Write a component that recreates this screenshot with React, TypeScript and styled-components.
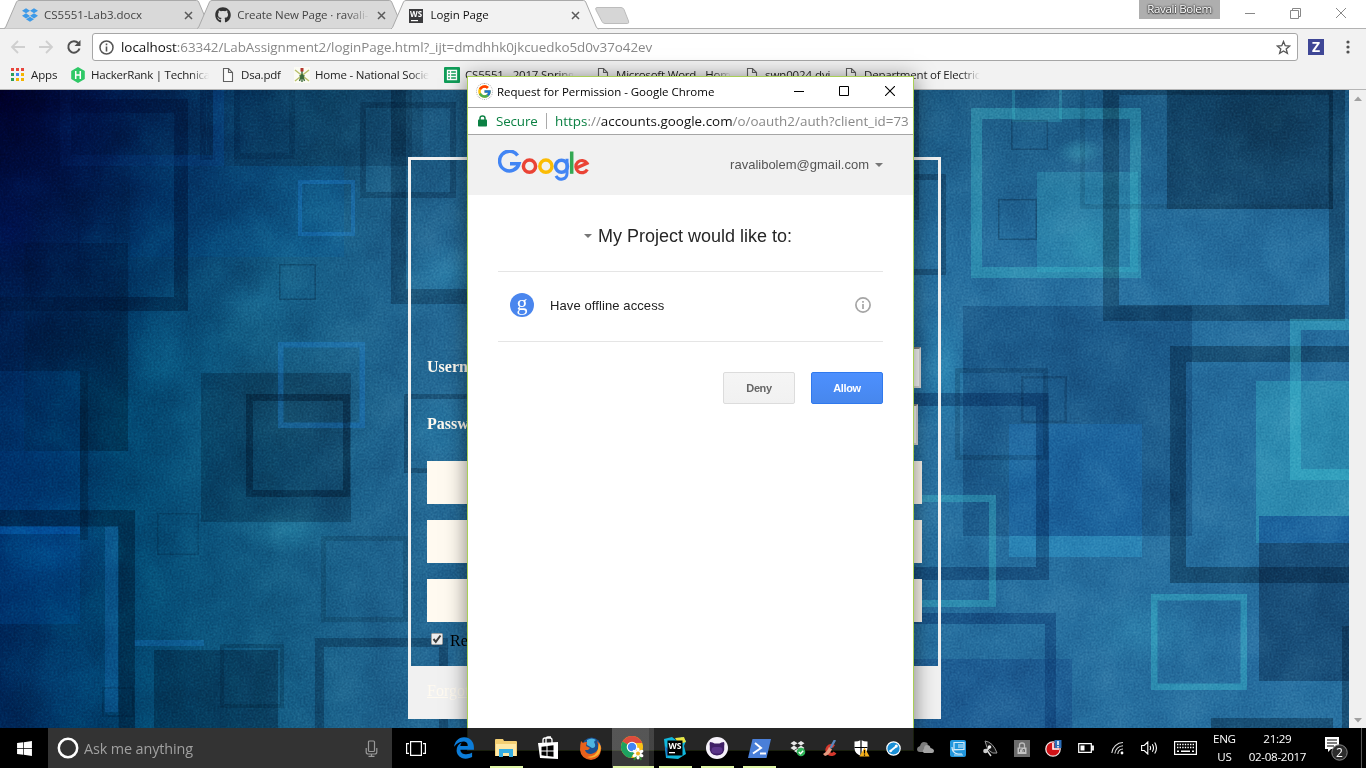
import React from "react";
import styled, { createGlobalStyle } from "styled-components";
import { FcGoogle } from "react-icons/fc";
import { FaGithub, FaDropbox, FaEdgeLegacy, FaWindows } from "react-icons/fa";

const UI = `"Open Sans", "Noto Sans", sans-serif`;
const ARIAL = `"Liberation Sans", Arial, sans-serif`;
const SERIF = `"Liberation Serif", "Times New Roman", serif`;

const Global = createGlobalStyle`
  * { box-sizing: border-box; }
  html, body { margin: 0; padding: 0; background: #000; overflow: hidden; }
  body { font-family: ${UI}; font-size: 11.5px; color: #222; }
  svg { display: block; flex: none; }
`;

const Desktop = styled.div`
  position: relative;
  width: 1366px;
  height: 768px;
  overflow: hidden;
  display: flex;
  flex-direction: column;
`;

/* ---------- browser frame ---------- */

const Browser = styled.div`
  flex: none;
  height: 728px;
  display: flex;
  flex-direction: column;
  background: #f2f2f2;
`;

const TabStrip = styled.div`
  height: 29px;
  flex: none;
  display: flex;
  background: #fff;
  border-bottom: 1px solid #b2b2b2;
  padding-left: 8px;
`;

const TabBox = styled.div<{ $active?: boolean }>`
  position: relative;
  width: 193.3px;
  height: ${(p) => (p.$active ? 29 : 28)}px;
  z-index: ${(p) => (p.$active ? 2 : 1)};
  flex: none;
  display: flex;
  align-items: center;
  padding: 2px 7px 0 14px;
`;

const TabShape = styled.svg`
  position: absolute;
  left: 0;
  top: 0;
  overflow: visible;
`;

const TabIcon = styled.span`
  position: relative;
  width: 16px;
  flex: none;
  margin-right: 6px;
`;

const TabTitle = styled.span<{ $active?: boolean; $fade?: boolean; $ls?: number }>`
  position: relative;
  width: 134px;
  flex: none;
  overflow: hidden;
  white-space: nowrap;
  padding-bottom: 2px;
  color: ${(p) => (p.$active ? "#111" : "#444")};
  letter-spacing: ${(p) => p.$ls ?? 0}px;
  ${(p) => p.$fade && "mask-image: linear-gradient(90deg, #000 82%, transparent 99%);"}
`;

const TabClose = styled.svg`
  position: relative;
  margin-left: 6px;
`;

const NewTab = styled.svg`
  margin: 6px 0 0 6px;
`;

const WindowControls = styled.div`
  margin-left: auto;
  display: flex;
  align-items: flex-start;
`;

const UserBadge = styled.div`
  width: 81px;
  height: 19px;
  background: #aeaeae;
  color: #fff;
  font-size: 11.5px;
  letter-spacing: -0.35px;
  line-height: 18px;
  text-align: center;
  text-shadow: 0 0 2px #333, 0 0 2px #333, 0 1px 1px #444;
`;

const ControlSlot = styled.div<{ $w: number; $pad?: number }>`
  width: ${(p) => p.$w}px;
  height: 26px;
  padding-left: ${(p) => p.$pad ?? 0}px;
  display: flex;
  align-items: center;
  justify-content: center;
`;

const Toolbar = styled.div`
  height: 35px;
  flex: none;
  display: flex;
  align-items: center;
  padding: 1px 11px 0 10px;
`;

const NavIcon = styled.svg<{ $gap: number }>`
  margin-right: ${(p) => p.$gap}px;
`;

const Omnibox = styled.div`
  width: 1206px;
  height: 28px;
  border: 1px solid #a6a6a6;
  border-radius: 3px;
  background: #fff;
  display: flex;
  align-items: center;
  padding: 0 6px;
`;

const Url = styled.span<{ $ls: number }>`
  flex: 1;
  margin-left: 7px;
  font-size: 13.4px;
  letter-spacing: ${(p) => p.$ls}px;
  color: #888;
  white-space: nowrap;
  overflow: hidden;
  b { font-weight: 400; color: #111; }
  i { font-style: normal; color: #0b8043; }
`;

const Extension = styled.div`
  width: 16px;
  height: 16px;
  margin-left: 10px;
  background: #3f4796;
  color: #fff;
  font: 700 14px/16px ${UI};
  text-align: center;
`;

const BookmarkBar = styled.div`
  height: 26px;
  flex: none;
  display: flex;
  padding-left: 10px;
  border-bottom: 1px solid #b6b6b6;
`;

const BookmarkItem = styled.div<{ $w: number }>`
  width: ${(p) => p.$w}px;
  height: 22px;
  flex: none;
  display: flex;
  align-items: center;
  gap: 5px;
`;

const BookmarkText = styled.span<{ $fade?: boolean; $ls?: number }>`
  max-width: 118px;
  overflow: hidden;
  white-space: nowrap;
  padding-bottom: 2px;
  letter-spacing: ${(p) => p.$ls ?? -0.2}px;
  ${(p) => p.$fade && "mask-image: linear-gradient(90deg, #000 84%, transparent 100%);"}
`;

/* ---------- web page ---------- */

const Viewport = styled.div`
  flex: 1;
  min-height: 0;
  display: flex;
`;

const Page = styled.main`
  position: relative;
  width: 1349px;
  overflow: hidden;
  font-family: ${SERIF};
  font-size: 16px;
`;

const Wallpaper = styled.svg`
  position: absolute;
  inset: 0;
`;

const ScrollBar = styled.div`
  width: 17px;
  background: #f0f0f0;
  display: flex;
  flex-direction: column;
  justify-content: space-between;
  align-items: center;
  padding: 6px 0 5px;
`;

const LoginCard = styled.form`
  position: relative;
  width: 533px;
  height: 562px;
  margin: 67px 0 0 408px;
  border: 3px solid #f1f1f1;
  border-bottom: 0;
  display: flex;
  flex-direction: column;
`;

const CardBody = styled.div`
  flex: 1;
  padding: 187px 16px 0;
`;

const FieldRow = styled.label<{ $pad: number }>`
  display: flex;
  align-items: center;
  justify-content: space-between;
  height: 41px;
  margin-bottom: 16px;
  padding-right: ${(p) => p.$pad}px;
  color: #fffaf0;
  font-weight: 700;
  span { padding-bottom: 2px; }
`;

const Field = styled.input`
  width: 380px;
  height: 41px;
  border: 2px inset #ddd;
  background: #fff;
`;

const FormButton = styled.button`
  display: block;
  width: 495px;
  height: 43px;
  margin: 0 0 16px;
  border: 0;
  background: #fffaf0;
`;

const Remember = styled.div`
  display: flex;
  align-items: center;
  height: 18px;
  margin-top: -8px;
  padding-left: 4px;
  gap: 7px;
  color: #000;
  font-size: 16px;
  span { padding-top: 4px; }
`;

const CardFooter = styled.div`
  height: 53px;
  margin: 0 -3px;
  padding: 16px 19px;
  background: #f1f1f1;
  a { color: #fffaf0; font-size: 16px; }
`;

/* ---------- popup window ---------- */

const Popup = styled.section`
  position: absolute;
  left: 467px;
  top: 76px;
  width: 447px;
  height: 675px;
  border: 1px solid #a9cf57;
  background: #fff;
  box-shadow: 0 2px 20px rgba(0, 0, 0, 0.5);
  display: flex;
  flex-direction: column;
  font-family: ${ARIAL};
`;

const PopupTitle = styled.div`
  height: 31px;
  flex: none;
  display: flex;
  align-items: center;
  padding: 0 0 2px 8px;
  border-bottom: 1px solid #a6a6a6;
  font-family: ${UI};
  font-size: 11.5px;
  color: #000;
`;

const PopupTitleText = styled.span`
  flex: 1;
  margin-left: 4px;
  letter-spacing: -0.02px;
`;

const PopupAddress = styled.div`
  height: 27px;
  flex: none;
  display: flex;
  align-items: center;
  padding: 0 5px 0 10px;
  border-bottom: 1px solid #a6a6a6;
  font-family: ${UI};
`;

const Secure = styled.span`
  width: 51px;
  margin-left: 9px;
  margin-right: 1px;
  border-right: 1px solid #aaa;
  line-height: 16px;
  font-size: 13.4px;
  color: #0b8043;
  letter-spacing: -0.15px;
  white-space: nowrap;
`;

const AccountBar = styled.div`
  height: 60px;
  flex: none;
  display: flex;
  align-items: center;
  justify-content: space-between;
  padding: 0 30px;
  background: #f1f1f1;
`;

const Account = styled.span`
  display: flex;
  align-items: center;
  gap: 6px;
  padding-bottom: 1px;
  font-size: 13px;
  color: #555;
`;

const Consent = styled.div`
  display: flex;
  flex-direction: column;
  padding: 0 30px;
`;

const ConsentTitle = styled.h1`
  height: 76px;
  margin: 0;
  padding: 6px 5px 0 0;
  display: flex;
  align-items: center;
  justify-content: center;
  gap: 6px;
  font-size: 18px;
  font-weight: 400;
  color: #262626;
`;

const Scope = styled.div`
  height: 71px;
  display: flex;
  align-items: center;
  padding: 0 12px 3px;
  border-top: 1px solid #e5e5e5;
  border-bottom: 1px solid #e5e5e5;
  margin-bottom: 30px;
  font-size: 13px;
  color: #222;
`;

const ScopeText = styled.span`
  flex: 1;
  margin-left: 16px;
  letter-spacing: 0.1px;
`;

const Actions = styled.div`
  display: flex;
  justify-content: flex-end;
  gap: 16px;
`;

const ActionButton = styled.button<{ $primary?: boolean }>`
  width: 72px;
  height: 32px;
  border-radius: 2px;
  padding: 0;
  font: 700 11px ${ARIAL};
  letter-spacing: -0.4px;
  border: 1px solid ${(p) => (p.$primary ? "#3079ed" : "#dcdcdc")};
  color: ${(p) => (p.$primary ? "#fff" : "#666")};
  background: ${(p) =>
    p.$primary ? "linear-gradient(#4d90fe, #4787ed)" : "linear-gradient(#f5f5f5, #f1f1f1)"};
`;

/* ---------- taskbar ---------- */

const Taskbar = styled.footer`
  position: relative;
  height: 40px;
  flex: none;
  display: flex;
  background: rgba(0, 0, 0, 0.85);
  color: #fff;
`;

const StartButton = styled.div`
  width: 48px;
  display: flex;
  align-items: center;
  justify-content: center;
`;

const SearchBox = styled.div`
  width: 344px;
  background: #333;
  display: flex;
  align-items: center;
  padding: 0 14px 0 9px;
  color: #a0a0a0;
  font-size: 14.4px;
  letter-spacing: -0.12px;
  span { flex: 1; margin-left: 5px; }
`;

const TaskView = styled.div`
  width: 51px;
  padding-right: 3px;
  display: flex;
  align-items: center;
  justify-content: center;
`;

const AppSlot = styled.div<{ $active?: boolean }>`
  position: relative;
  width: 42.2px;
  display: flex;
  align-items: center;
  justify-content: center;
  ${(p) => p.$active && "background: linear-gradient(90deg, rgba(255,255,255,.22) 37px, rgba(255,255,255,.14) 37px);"}
`;

const RunningBar = styled.div<{ $l: number; $w: number }>`
  position: absolute;
  left: ${(p) => p.$l}px;
  bottom: 0;
  width: ${(p) => p.$w}px;
  height: 2px;
  background: #dff5a5;
`;

const Tray = styled.div`
  margin-left: 1.4px;
  display: flex;
`;

const TraySlot = styled.div<{ $w?: number }>`
  width: ${(p) => p.$w ?? 32}px;
  display: flex;
  align-items: center;
  justify-content: center;
`;

const TrayText = styled.div<{ $w: number }>`
  width: ${(p) => p.$w}px;
  display: flex;
  flex-direction: column;
  align-items: center;
  justify-content: center;
  font-size: 11.6px;
  line-height: 18px;
  letter-spacing: -0.3px;
  white-space: nowrap;
`;

const ShowDesktop = styled.div`
  margin-left: auto;
  width: 5px;
  border-left: 1px solid #555;
`;

/* ---------- small drawings ---------- */

const CloseX = () => (
  <TabClose width="9" height="9" viewBox="0 0 9 9">
    <path d="M1 1l7 7M8 1l-7 7" stroke="#5a5a5a" strokeWidth="1.5" />
  </TabClose>
);

const WsMark = () => (
  <svg width="14" height="14" viewBox="0 0 14 14">
    <rect width="14" height="14" fill="#3b3b3d" />
    <text x="7" y="8.200" fontSize="8.600" fontWeight="700" fill="#fff" textAnchor="middle" fontFamily="Open Sans" textLength="12" lengthAdjust="spacingAndGlyphs">WS</text>
    <rect x="2" y="11" width="7" height="1.200" fill="#fff" />
  </svg>
);

const PageIcon = () => (
  <svg width="16" height="16" viewBox="0 0 16 16">
    <path d="M3.500 1.500h5l4 4v9h-9zM8.500 1.500v4h4" fill="#fafafa" stroke="#606060" strokeWidth="1.100" />
  </svg>
);

const AppsIcon = () => {
  const colors = ["#e8453c", "#e8453c", "#e8453c", "#2d9d59", "#4285f4", "#f4b400", "#2d9d59", "#f4b400", "#f4b400"];
  return (
    <svg width="16" height="16" viewBox="0 0 16 16">
      {colors.map((c, i) => (
        <rect key={i} x={1 + (i % 3) * 5} y={1 + Math.floor(i / 3) * 5} width="3" height="3" fill={c} />
      ))}
    </svg>
  );
};

const HackerRankIcon = () => (
  <svg width="16" height="16" viewBox="0 0 16 16">
    <path d="M8 0l6.800 4v8L8 16l-6.800-4V4z" fill="#2ec866" />
    <path d="M5.700 4v8M10.300 4v8M5.700 8h4.600" stroke="#fff" strokeWidth="1.500" />
  </svg>
);

const SocietyIcon = () => (
  <svg width="16" height="16" viewBox="0 0 16 16">
    <rect width="16" height="16" fill="#fbfbf4" />
    <path d="M1 3l14 11M15 3L1 14" stroke="#b9c06c" strokeWidth="1.500" />
    <path d="M8 4v11M5.500 14l2.500-7 2.500 7M5.500 8.500L8 10l2.500-1.500" stroke="#3d6b3a" strokeWidth="1.400" fill="none" />
    <rect x="6.500" y="1" width="3" height="3.500" fill="#b3362c" />
  </svg>
);

const SheetsIcon = () => (
  <svg width="16" height="16" viewBox="0 0 16 16">
    <rect width="16" height="16" rx="1" fill="#0f9d58" />
    <path d="M3.500 3.500h9v9h-9zM3.500 6.500h9M3.500 9.500h9M6.500 3.500v9" stroke="#fff" strokeWidth="1.300" fill="none" />
  </svg>
);

const Caret = () => (
  <svg width="8" height="4" viewBox="0 0 8 4"><path d="M0 0h8L4 4z" fill="#777" /></svg>
);

const GoogleLogo = () => (
  <svg width="92" height="31" viewBox="498 150 92 31" fill="none" strokeWidth="3.500" role="img" aria-label="Google">
    <path d="M517.600 155.400A9.900 9.900 0 1 0 519 163.700H510" stroke="#4285f4" />
    <circle cx="529.500" cy="166.200" r="6.100" stroke="#ea4335" />
    <circle cx="545.900" cy="166.200" r="6.100" stroke="#fbbc05" />
    <circle cx="561.500" cy="166.200" r="6" stroke="#4285f4" />
    <path d="M567 158.800V173.400A5.800 5.800 0 0 1 556 175.900" stroke="#4285f4" strokeWidth="3" />
    <path d="M571.700 151.500V173.800" stroke="#34a853" />
    <path d="M587.300 169.500A6.100 6.100 0 1 1 587 163.200L576.400 168" stroke="#ea4335" strokeWidth="3.200" />
  </svg>
);

const Ring = styled.span`
  width: 17px;
  height: 17px;
  display: flex;
  align-items: center;
  justify-content: center;
  border: 1px dotted #aaa;
  border-radius: 50%;
`;

type RectSpec = [number, number, number, number, string, number];
type FrameSpec = [number, number, number, number, number, string, number];

const D = "#00152b";
const B = "#1e7fd0";
const C = "#3fc6d4";

/* x1, y1, x2, y2, colour, opacity */
const FILLS: RectSpec[] = [
  [234, 90, 412, 166, D, 0.2],
  [130, 166, 344, 257, "#0060a8", 0.2],
  [391, 90, 423, 156, D, 0.15],
  [24, 243, 128, 451, D, 0.38],
  [0, 243, 24, 451, D, 0.15],
  [0, 371, 80, 624, "#0060b8", 0.2],
  [80, 371, 88, 540, D, 0.3],
  [201, 373, 351, 522, D, 0.28],
  [0, 526, 80, 534, "#0a6cd0", 0.35],
  [105, 526, 118, 712, B, 0.25],
  [134, 640, 204, 646, B, 0.3],
  [154, 650, 278, 728, D, 0.36],
  [1037, 172, 1138, 272, C, 0.24],
  [1167, 90, 1333, 209, D, 0.36],
  [963, 306, 1192, 536, "#0a3566", 0.34],
  [1256, 381, 1349, 543, C, 0.32],
  [1009, 424, 1142, 557, B, 0.26],
  [1009, 536, 1142, 557, C, 0.22],
  [1259, 516, 1349, 543, "#1b5f9c", 0.9],
  [1259, 543, 1349, 681, "#164972", 0.85],
  [914, 659, 1072, 728, "#17508a", 0.55],
  [1211, 718, 1333, 728, D, 0.36],
  [1342, 626, 1349, 728, D, 0.35],
];

/* outer x1, y1, x2, y2, thickness, colour, opacity */
const FRAMES: FrameSpec[] = [
  [-40, 99, 188, 311, 14, D, 0.44],
  [60, 60, 224, 166, 11, "#0a6cd0", 0.28],
  [200, 40, 213, 160, 6, D, 0.25],
  [234, 60, 295, 159, 6, D, 0.18],
  [298, 180, 355, 236, 4, B, 0.4],
  [360, 102, 456, 198, 6, D, 0.25],
  [391, 60, 640, 304, 15, D, 0.3],
  [279, 264, 316, 300, 1.5, D, 0.26],
  [78, 223, 116, 260, 1.5, D, 0.2],
  [278, 342, 365, 428, 5.5, B, 0.38],
  [246, 394, 350, 497, 7, D, 0.4],
  [-30, 510, 135, 760, 16.5, D, 0.45],
  [157, 513, 199, 555, 1.5, D, 0.2],
  [321, 536, 408, 622, 5, D, 0.17],
  [220, 644, 284, 708, 4, D, 0.22],
  [102, 687, 134, 717, 2, D, 0.2],
  [315, 638, 448, 760, 9, D, 0.3],
  [404, 394, 500, 473, 5, D, 0.3],
  [840, 174, 946, 275, 6, D, 0.3],
  [700, 60, 919, 220, 5, D, 0.3],
  [971, 108, 1141, 278, 11, C, 0.34],
  [1012, 60, 1062, 122, 3, C, 0.25],
  [1011, 120, 1048, 150, 1.5, D, 0.25],
  [998, 199, 1037, 240, 1.5, D, 0.28],
  [1103, 79, 1345, 321, 16, D, 0.33],
  [1080, 0, 1333, 209, 5, D, 0.12],
  [1170, 346, 1420, 583, 16, D, 0.36],
  [1290, 319, 1400, 480, 11, C, 0.38],
  [800, 393, 1049, 580, 13, "#001d4a", 0.36],
  [955, 368, 1048, 460, 5, D, 0.18],
  [1021, 376, 1067, 423, 2.5, D, 0.2],
  [860, 495, 996, 607, 7, C, 0.36],
  [1151, 594, 1247, 690, 6.5, C, 0.4],
  [800, 613, 1056, 780, 11, "#0a3870", 0.5],
];

/* cx, cy, rx, ry, colour, opacity */
const GLOWS: [number, number, number, number, string, number][] = [
  [265, 300, 60, 30, "#2f9cc8", 0.2],
  [170, 350, 60, 60, "#1284b8", 0.14],
  [290, 530, 50, 26, "#3ab4d0", 0.3],
  [450, 275, 60, 34, "#38a8d0", 0.3],
  [440, 430, 40, 40, "#38a8d0", 0.28],
  [945, 370, 26, 70, "#34a8d0", 0.38],
  [1080, 152, 24, 14, "#50d0d8", 0.3],
  [1090, 245, 30, 30, "#50d0d8", 0.24],
  [1010, 465, 44, 24, "#40b0d0", 0.24],
  [1140, 630, 60, 40, "#40b4d0", 0.22],
  [55, 550, 70, 50, "#0864b4", 0.3],
  [70, 680, 70, 50, "#0878b8", 0.22],
  [12, 230, 30, 40, "#0018a0", 0.25],
  [1270, 120, 60, 60, "#001020", 0.28],
  [300, 400, 100, 60, "#2c6478", 0.25],
  [1270, 650, 60, 60, "#2a68b0", 0.15],
];

const PageWallpaper = () => (
  <Wallpaper width="1349" height="638" viewBox="0 90 1349 638">
    <defs>
      <linearGradient id="base" x1="0" x2="1" y1="0" y2="0">
        <stop offset="0" stopColor="#00386a" />
        <stop offset="0.09" stopColor="#024973" />
        <stop offset="0.2" stopColor="#125a82" />
        <stop offset="0.32" stopColor="#236894" />
        <stop offset="0.7" stopColor="#266f9f" />
        <stop offset="1" stopColor="#266f9f" />
      </linearGradient>
      <linearGradient id="topShade" x1="0" x2="0" y1="0" y2="1">
        <stop offset="0" stopColor="#002540" stopOpacity="0.3" />
        <stop offset="0.25" stopColor="#002540" stopOpacity="0" />
      </linearGradient>
      <radialGradient id="corner" gradientUnits="userSpaceOnUse" cx="0" cy="90" r="330">
        <stop offset="0" stopColor="#000024" />
        <stop offset="0.3" stopColor="#00063c" stopOpacity="0.72" />
        <stop offset="1" stopColor="#001048" stopOpacity="0" />
      </radialGradient>
      <linearGradient id="edge" x1="0" x2="1" y1="0" y2="0">
        <stop offset="0" stopColor="#000c40" stopOpacity="0.42" />
        <stop offset="1" stopColor="#000c40" stopOpacity="0" />
      </linearGradient>
      {GLOWS.map((g, i) => (
        <radialGradient id={`glow${i}`} key={i}>
          <stop offset="0" stopColor={g[4]} stopOpacity={g[5]} />
          <stop offset="1" stopColor={g[4]} stopOpacity="0" />
        </radialGradient>
      ))}
      <filter id="grain" x="0" y="0" width="100%" height="100%" colorInterpolationFilters="sRGB">
        <feTurbulence type="fractalNoise" baseFrequency="0.5" numOctaves="3" seed="4" />
        <feColorMatrix values="1.5 0 0 0 -0.25  1.5 0 0 0 -0.25  1.5 0 0 0 -0.25  0 0 0 0 1" />
      </filter>
      <filter id="mottle" x="0" y="0" width="100%" height="100%" colorInterpolationFilters="sRGB">
        <feTurbulence type="fractalNoise" baseFrequency="0.022" numOctaves="5" seed="9" />
        <feColorMatrix values="1.5 0 0 0 -0.25  1.5 0 0 0 -0.25  1.5 0 0 0 -0.25  0 0 0 0 1" />
      </filter>
    </defs>
    <rect y="90" width="1349" height="638" fill="url(#base)" />
    <rect y="90" width="1349" height="638" fill="url(#topShade)" />
    <rect y="90" width="150" height="638" fill="url(#edge)" />
    {GLOWS.map(([cx, cy, rx, ry], i) => (
      <ellipse key={i} cx={cx} cy={cy} rx={rx} ry={ry} fill={`url(#glow${i})`} />
    ))}
    {FILLS.map(([x1, y1, x2, y2, c, o], i) => (
      <rect key={i} x={x1} y={y1} width={x2 - x1} height={y2 - y1} fill={c} opacity={o} />
    ))}
    {FRAMES.map(([x1, y1, x2, y2, t, c, o], i) => (
      <rect key={i} x={x1 + t / 2} y={y1 + t / 2} width={x2 - x1 - t} height={y2 - y1 - t} fill="none" stroke={c} strokeWidth={t} opacity={o} />
    ))}
    <rect y="90" width="420" height="400" fill="url(#corner)" />
    <rect y="90" width="1349" height="638" filter="url(#mottle)" opacity="0.16" style={{ mixBlendMode: "soft-light" }} />
    <rect y="90" width="1349" height="638" filter="url(#grain)" opacity="0.22" style={{ mixBlendMode: "soft-light" }} />
  </Wallpaper>
);

/* ---------- taskbar icons ---------- */

const ExplorerIcon = () => (
  <svg width="22" height="20" viewBox="0 0 22 20">
    <path d="M0 2q0-1 1-1h7l1 2h12q1 0 1 1v14H0z" fill="#f4cf73" />
    <path d="M1 6h20v12H1z" fill="#ffe9a6" />
    <path d="M4 19v-8h14v8h-4v-4H8v4z" fill="#35aee2" />
  </svg>
);

const StoreIcon = () => (
  <svg width="22" height="24" viewBox="0 0 22 24">
    <path d="M6 7V4q0-2 2-2h5q2 0 2 2v3M9 7V3q0-2 2-2h3" stroke="#fff" fill="none" strokeWidth="1.300" />
    <path d="M1 7l20-1v17L3 22z" fill="#fff" />
    <path d="M4.500 10.800l5-.6v4.300h-5zM10.500 10.100l6-.8v5.200h-6zM4.500 15.500h5v4.400l-5-.6zM10.500 15.500h6v5.200l-6-.7z" fill="#000" />
  </svg>
);

const FirefoxIcon = () => (
  <svg width="23" height="23" viewBox="0 0 23 23">
    <circle cx="12.500" cy="10" r="9.500" fill="#1b4f8f" />
    <path d="M8 3q5-3 9 0-3 1-1 4 1 4-3 4-3-2-5-3z" fill="#4db4e0" />
    <path d="M2 4l2 2q1-1 4-1l-1 4 4 2-2 2-3 0q1 4 6 4 5-1 7-5 1-4-1-8 5 4 4 9-1 9-10 10Q2 22 1 13 1 8 2 4z" fill="#e8611c" />
    <path d="M20 6q4 6-1 12-5 4-11 2 10-1 11-8z" fill="#f9b233" />
  </svg>
);

const ChromeIcon = () => (
  <svg width="24" height="25" viewBox="0 0 24 25">
    <circle cx="11" cy="11" r="11" fill="#fbc116" />
    <path d="M11 11L1.500 5.500A11 11 0 0 1 20.500 5.500L21 7H11z" fill="#dd4b3e" />
    <path d="M11 11L1.500 5.500A11 11 0 0 0 10 22L15 14z" fill="#1da261" />
    <circle cx="11" cy="11" r="5.300" fill="#fff" />
    <circle cx="11" cy="11" r="4.200" fill="#4285f4" />
    <path d="M17 18l-4 6M18 18l2 6" stroke="#2f8c2f" strokeWidth="2" />
    {[0, 60, 120, 180, 240, 300].map((a) => (
      <ellipse key={a} cx="17" cy="14" rx="1.600" ry="2.600" fill="#fff" transform={`rotate(${a} 17 17.500)`} />
    ))}
    <circle cx="17" cy="17.500" r="2" fill="#f1b21e" />
  </svg>
);

const WebStormIcon = () => (
  <svg width="24" height="24" viewBox="0 0 24 24">
    <path d="M1 3l8-2 4 3 6-3 4 4-2 5 2 8-8 5-12-1z" fill="#10b7dc" />
    <path d="M12 2l9-1 2 5-7 2z" fill="#e9e543" />
    <path d="M4 22l-2-12 4 4z" fill="#1c70c8" />
    <rect x="4.500" y="4.500" width="15" height="15" fill="#000" />
    <text x="12" y="13" fontSize="9" fontWeight="700" fill="#fff" textAnchor="middle" fontFamily="Open Sans" textLength="13" lengthAdjust="spacingAndGlyphs">WS</text>
    <rect x="6" y="16" width="6" height="1.300" fill="#fff" />
  </svg>
);

const GithubDesktopIcon = () => (
  <svg width="22" height="22" viewBox="0 0 22 22">
    <circle cx="11" cy="11" r="11" fill="#f6f2fa" />
    <path d="M4 5q3 0 4.500 1.500h5Q15 5 18 5q.8 2 .2 4 1.200 9-7.200 9.500Q2.600 18 3.800 9 3.200 7 4 5z" fill="#3f1f66" />
    <rect x="5.500" y="10" width="11" height="6.500" rx="3.200" fill="#5a3488" />
  </svg>
);

const PowerShellIcon = () => (
  <svg width="23" height="19" viewBox="0 0 23 19">
    <path d="M4.500 0H23l-4.500 19H0z" fill="#4a7fd8" />
    <path d="M7 4l6 5-8 5.500M12 14.500h6" stroke="#fff" strokeWidth="2" fill="none" />
  </svg>
);

const CCleanerIcon = () => (
  <svg width="16" height="17" viewBox="0 0 16 17">
    <path d="M12 6.500A4.300 4.300 0 1 0 13 12.500" stroke="#d5372c" strokeWidth="3.600" fill="none" />
    <path d="M8.500 8l4.500-8" stroke="#5b88bd" strokeWidth="2.400" />
    <path d="M1 14q4-2 6-7l3 2.500Q7 15 3 16z" fill="#e59a80" />
  </svg>
);

const DefenderIcon = () => (
  <svg width="16" height="17" viewBox="0 0 16 17">
    <path d="M.5 1.500Q4 1.500 7 0q3 1.500 6.500 1.500v6q0 6-6.500 8.500Q.5 13.500.5 8z" fill="#fff" />
    <path d="M7 0v16M.5 7.500h13" stroke="#000" strokeWidth="1.200" />
    <path d="M10.500 7.500l5 9h-10z" fill="#f5b01a" />
    <path d="M10.500 10v3.500M10.500 14.500v1.200" stroke="#000" strokeWidth="1.200" />
  </svg>
);

const WrenchIcon = () => (
  <svg width="15" height="15" viewBox="0 0 15 15">
    <circle cx="7.500" cy="7.500" r="6.700" fill="#1a8fd6" stroke="#fff" strokeWidth="1.200" />
    <path d="M4.500 10L10 5.500" stroke="#fff" strokeWidth="1.800" strokeLinecap="round" />
    <circle cx="10.300" cy="5" r="1.500" fill="#fff" />
    <circle cx="4.600" cy="10" r="1.300" fill="#fff" />
  </svg>
);

const CloudIcon = () => (
  <svg width="17" height="14" viewBox="0 0 17 14">
    <path d="M3 11Q0 11 0 8q0-2 3-3 1-4 4-4 3 0 4 2l-5 8z" fill="#7c7c7c" />
    <path d="M7 12q-2-1-1-3l1-1q0-4 3-4 3 0 3.500 3Q17 8 17 10q0 2-2 2z" fill="#a4a4a4" />
  </svg>
);

const IntelIcon = () => (
  <svg width="16" height="17" viewBox="0 0 16 17">
    <rect width="16" height="17" rx="2" fill="#2196dd" />
    <path d="M4 2.500h10v7H4zM3 10l11-.5M2 7q0 6 6 7h4M8 7h5M8 5h5" stroke="#d7ecf8" strokeWidth="1.200" fill="none" />
    <path d="M4 15h9" stroke="#b9e0f6" />
  </svg>
);

const DishIcon = () => (
  <svg width="16" height="17" viewBox="0 0 16 17">
    <path d="M3 1q8 1 12 12-9 2-12-12z" fill="#161616" stroke="#999" strokeWidth="1" />
    <path d="M8 7l-5 5M4 9l5 7" stroke="#ddd" strokeWidth="1.400" />
    <circle cx="3.500" cy="11" r="2.300" fill="#ccc" />
    <circle cx="7.500" cy="7" r="1.800" fill="#eee" />
  </svg>
);

const LockTrayIcon = () => (
  <svg width="16" height="17" viewBox="0 0 16 17">
    <rect width="16" height="17" fill="#6c6c6c" />
    <path d="M5.500 8V5q0-2 2.500-2t2.500 2v3" stroke="#bdbdbd" strokeWidth="1.300" fill="none" />
    <rect x="3.500" y="7.500" width="9" height="6.500" fill="#c4c4c4" />
    <path d="M5.500 9v3M5.500 9h2M9 12V9.500h1.500V12" stroke="#555" strokeWidth=".8" fill="none" />
  </svg>
);

const ClockTrayIcon = () => (
  <svg width="17" height="17" viewBox="0 0 17 17">
    <circle cx="8" cy="9" r="7.200" fill="#d01217" stroke="#f0e0e0" strokeWidth="1.300" />
    <path d="M8 3v6h6" stroke="#fff" strokeWidth="1.600" fill="none" />
    <rect x="9.500" y="0" width="7" height="8" fill="#2a6db8" />
    <path d="M13 1v4M13 6v1.400" stroke="#fff" strokeWidth="1.500" />
  </svg>
);

const BatteryIcon = () => (
  <svg width="16" height="10" viewBox="0 0 16 10">
    <path d="M.7.700h12.600v8.600H.700zM14 3h1.300v4H14z" stroke="#fff" strokeWidth="1.200" fill="none" />
    <rect x="2.500" y="2.500" width="4" height="5" fill="#fff" />
  </svg>
);

const WifiIcon = () => (
  <svg width="13" height="14" viewBox="0 0 13 14" fill="none" stroke="#ddd" strokeWidth="1.100">
    <path d="M.8 12A11.500 11.500 0 0 1 12 1.500M3.800 12.500A8.500 8.500 0 0 1 12 4.800M6.800 13A5.500 5.500 0 0 1 12 8" />
    <circle cx="11" cy="12" r="1.400" fill="#fff" stroke="none" />
  </svg>
);

const VolumeIcon = () => (
  <svg width="17" height="14" viewBox="0 0 17 14" fill="none" stroke="#fff" strokeWidth="1.100">
    <path d="M.6 4.500h2.600L6.800 1v12L3.200 9.500H.6zM9 5q1.200 2 0 4M11.300 3.300q2.400 3.700 0 7.400M13.700 1.500q3.500 5.500 0 11" />
  </svg>
);

const KeyboardIcon = () => (
  <svg width="23" height="14" viewBox="0 0 23 14">
    <rect x=".6" y=".6" width="21.800" height="12.800" fill="none" stroke="#fff" strokeWidth="1.200" />
    <path d="M3 3.500h17M3 6.500h17" stroke="#fff" strokeWidth="1.400" strokeDasharray="1.400 1.200" />
    <path d="M3 10.200h2M7 10.200h9M18 10.200h2" stroke="#fff" strokeWidth="1.400" />
  </svg>
);

const NotifyIcon = () => (
  <svg width="24" height="28" viewBox="0 0 24 28">
    <path d="M1 3h14v12H7l-3 3v-3H1z" fill="#fff" />
    <path d="M3 6h10M3 9h10M3 12h7" stroke="#000" strokeWidth="1.200" />
    <circle cx="15.500" cy="18.500" r="7.700" fill="#2c2c2c" stroke="#888" strokeWidth="1" />
    <text x="15.500" y="23" fontSize="12" fill="#fff" textAnchor="middle" fontFamily="Open Sans">2</text>
  </svg>
);

const DropboxTrayIcon = () => (
  <svg width="16" height="17" viewBox="0 0 16 17">
    <path d="M4 1l3.500 2.300L4 5.600.5 3.300zM11 1l3.500 2.300L11 5.600 7.500 3.300zM4 5.600l3.500 2.300L4 10.200.5 7.900zM11 5.600l3.500 2.300L11 10.200 7.500 7.900zM4 11l3.500-2.300L11 11l-3.500 2.300z" fill="#e8e8e8" />
    <circle cx="11" cy="12" r="4.300" fill="#2fb457" />
    <path d="M8.800 12l1.700 1.700 2.700-3" stroke="#fff" strokeWidth="1.400" fill="none" />
  </svg>
);

/* ---------- composed parts ---------- */

type TabProps = { icon: React.ReactNode; title: string; active?: boolean; fade?: boolean; ls?: number };

const Tab = ({ icon, title, active, fade, ls }: TabProps) => (
  <TabBox $active={active}>
    <TabShape width="193" height="29" viewBox="0 0 193 29">
      <path
        d={`M-4 ${active ? 29 : 28.5}L-2.500 27.500 8.500 2Q9.200.500 11 .500H188.500Q190 .500 190.700 2L201.500 27.500 203.500 ${active ? 29 : 28.5}`}
        fill={active ? "#f2f2f2" : "#d9d9d9"}
        stroke="#a9a9a9"
      />
    </TabShape>
    <TabIcon>{icon}</TabIcon>
    <TabTitle $active={active} $fade={fade} $ls={ls}>{title}</TabTitle>
    <CloseX />
  </TabBox>
);

type BookmarkProps = { icon: React.ReactNode; text: string; w: number; fade?: boolean; ls?: number };

const Bookmark = ({ icon, text, w, fade, ls }: BookmarkProps) => (
  <BookmarkItem $w={w}>
    {icon}
    <BookmarkText $fade={fade} $ls={ls}>{text}</BookmarkText>
  </BookmarkItem>
);

export default function App() {
  return (
    <Desktop>
      <Global />
      <Browser>
        <TabStrip>
          <Tab icon={<FaDropbox size={16} color="#3d9ae8" />} title="CS5551-Lab3.docx" />
          <Tab icon={<FaGithub size={16} color="#333" />} title="Create New Page · ravali-" fade ls={-0.08} />
          <Tab icon={<WsMark />} title="Login Page" active />
          <NewTab width="36" height="19" viewBox="0 0 36 19">
            <path d="M3 1.500h24q2 0 3 2l4.500 11.500q.8 2.500-1 2.500H11q-2 0-3-2L2 4Q1 1.500 3 1.500z" fill="#d6d6d6" stroke="#bcbcbc" />
          </NewTab>
          <WindowControls>
            <UserBadge>Ravali Bolem</UserBadge>
            <ControlSlot $w={60}>
              <svg width="10" height="10" viewBox="0 0 10 10"><path d="M0 5.500h10" stroke="#888" /></svg>
            </ControlSlot>
            <ControlSlot $w={30}>
              <svg width="11" height="11" viewBox="0 0 11 11"><path d="M.5 2.500h8v8h-8zM2.500 2.500v-2h8v8h-2" stroke="#888" fill="none" /></svg>
            </ControlSlot>
            <ControlSlot $w={56} $pad={6}>
              <svg width="12" height="12" viewBox="0 0 12 12"><path d="M1 1l10 10M11 1L1 11" stroke="#888" /></svg>
            </ControlSlot>
          </WindowControls>
        </TabStrip>

        <Toolbar>
          <NavIcon $gap={12} width="16" height="16" viewBox="0 0 16 16">
            <path d="M15 8H2M8 2L2 8l6 6" stroke="#cfcfcf" strokeWidth="1.800" fill="none" />
          </NavIcon>
          <NavIcon $gap={12} width="16" height="16" viewBox="0 0 16 16">
            <path d="M1 8h13M8 2l6 6-6 6" stroke="#cfcfcf" strokeWidth="1.800" fill="none" />
          </NavIcon>
          <NavIcon $gap={10} width="16" height="16" viewBox="0 0 16 16">
            <path d="M13.500 9.500A5.700 5.700 0 1 1 12.300 4.200" stroke="#505050" strokeWidth="2" fill="none" />
            <path d="M14.500 1v6h-6z" fill="#505050" />
          </NavIcon>
          <Omnibox>
            <svg width="15" height="15" viewBox="0 0 15 15">
              <circle cx="7.500" cy="7.500" r="6.500" fill="none" stroke="#555" strokeWidth="1.500" />
              <path d="M7.500 6.500v5M7.500 3.500v1.700" stroke="#555" strokeWidth="1.600" />
            </svg>
            <Url $ls={-0.03}><b>localhost</b>:63342/LabAssignment2/loginPage.html?_ijt=dmdhhk0jkcuedko5d0v37o42ev</Url>
            <svg width="15" height="15" viewBox="0 0 15 15">
              <path d="M7.500 1.500l1.700 4.200 4.500.3-3.500 2.900 1.200 4.400-3.900-2.400-3.900 2.400 1.200-4.400L1.300 6l4.500-.3z" fill="none" stroke="#555" strokeWidth="1.300" />
            </svg>
          </Omnibox>
          <Extension>Z</Extension>
          <svg width="4" height="14" viewBox="0 0 4 14" style={{ marginLeft: "auto", marginRight: 5 }}>
            <circle cx="2" cy="2" r="1.600" fill="#505050" />
            <circle cx="2" cy="7" r="1.600" fill="#505050" />
            <circle cx="2" cy="12" r="1.600" fill="#505050" />
          </svg>
        </Toolbar>

        <BookmarkBar>
          <Bookmark w={60} icon={<AppsIcon />} text="Apps" ls={-0.1} />
          <Bookmark w={150} icon={<HackerRankIcon />} text="HackerRank | Technica" fade ls={-0.22} />
          <Bookmark w={74} icon={<PageIcon />} text="Dsa.pdf" />
          <Bookmark w={150} icon={<SocietyIcon />} text="Home - National Socie" fade />
          <Bookmark w={151} icon={<SheetsIcon />} text="CS5551 - 2017 Spring" fade />
          <Bookmark w={149} icon={<PageIcon />} text="Microsoft Word - Hom" fade />
          <Bookmark w={99} icon={<PageIcon />} text="swn0024.dvi" ls={-0.1} />
          <Bookmark w={140} icon={<PageIcon />} text="Department of Electric" fade />
        </BookmarkBar>

        <Viewport>
          <Page>
            <PageWallpaper />
            <LoginCard>
              <CardBody>
                <FieldRow $pad={1}><span>Username</span><Field /></FieldRow>
                <FieldRow $pad={4}><span>Password</span><Field type="password" /></FieldRow>
                <FormButton type="button" />
                <FormButton type="button" />
                <FormButton type="button" />
                <Remember>
                  <svg width="12" height="12" viewBox="0 0 12 12">
                    <rect x=".5" y=".5" width="11" height="11" rx="1" fill="#ededed" stroke="#a0a0a0" />
                    <path d="M2.500 6l2.300 2.800L9.500 2.500" stroke="#3c3c3c" strokeWidth="2" fill="none" />
                  </svg>
                  <span>Remember me</span>
                </Remember>
              </CardBody>
              <CardFooter><a href="#">Forgot password?</a></CardFooter>
            </LoginCard>
          </Page>
          <ScrollBar>
            <svg width="8" height="5" viewBox="0 0 8 5"><path d="M0 5l4-4.500L8 5z" fill="#a0a0a0" /></svg>
            <svg width="8" height="5" viewBox="0 0 8 5"><path d="M0 0l4 4.500L8 0z" fill="#a0a0a0" /></svg>
          </ScrollBar>
        </Viewport>
      </Browser>

      <Popup>
        <PopupTitle>
          <Ring><FcGoogle size={15} /></Ring>
          <PopupTitleText>Request for Permission - Google Chrome</PopupTitleText>
          <ControlSlot $w={45}>
            <svg width="10" height="10" viewBox="0 0 10 10"><path d="M0 5.500h10" stroke="#000" /></svg>
          </ControlSlot>
          <ControlSlot $w={45}>
            <svg width="10" height="10" viewBox="0 0 10 10"><path d="M.5.5h9v9h-9z" stroke="#000" fill="none" /></svg>
          </ControlSlot>
          <ControlSlot $w={47}>
            <svg width="10" height="10" viewBox="0 0 10 10"><path d="M0 0l10 10M10 0L0 10" stroke="#000" strokeWidth="1.100" /></svg>
          </ControlSlot>
        </PopupTitle>
        <PopupAddress>
          <svg width="9" height="12" viewBox="0 0 9 12">
            <path d="M2 5V3.200Q2 1 4.500 1T7 3.200V5" stroke="#0b8043" strokeWidth="1.500" fill="none" />
            <rect y="4.500" width="9" height="7" rx=".8" fill="#0b8043" />
          </svg>
          <Secure>Secure</Secure>
          <Url $ls={0.02}><i>https</i>://<b>accounts.google.com</b>/o/oauth2/auth?client_id=73</Url>
        </PopupAddress>
        <AccountBar>
          <GoogleLogo />
          <Account>ravalibolem@gmail.com<Caret /></Account>
        </AccountBar>
        <Consent>
          <ConsentTitle><Caret />My Project would like to:</ConsentTitle>
          <Scope>
            <svg width="24" height="24" viewBox="0 0 24 24">
              <circle cx="12" cy="12" r="12" fill="#4a86ee" />
              <text x="12" y="16.500" fontSize="22" fill="#fff" textAnchor="middle" fontFamily="Liberation Serif">g</text>
            </svg>
            <ScopeText>Have offline access</ScopeText>
            <svg width="16" height="16" viewBox="0 0 16 16">
              <circle cx="8" cy="8" r="7.100" fill="none" stroke="#a5a5a5" strokeWidth="1.700" />
              <path d="M8 7v5M8 4v1.800" stroke="#a5a5a5" strokeWidth="1.700" />
            </svg>
          </Scope>
          <Actions>
            <ActionButton>Deny</ActionButton>
            <ActionButton $primary>Allow</ActionButton>
          </Actions>
        </Consent>
      </Popup>

      <Taskbar>
        <StartButton><FaWindows size={17} color="#fff" /></StartButton>
        <SearchBox>
          <svg width="22" height="22" viewBox="0 0 22 22"><circle cx="11" cy="11" r="9.200" fill="none" stroke="#fff" strokeWidth="2.500" /></svg>
          <span>Ask me anything</span>
          <svg width="13" height="17" viewBox="0 0 13 17" fill="none" stroke="#999" strokeWidth="1.200">
            <rect x="3.500" y="1" width="6" height="10.500" rx="1" />
            <path d="M1.200 8v4q0 2 2 2h6.600q2 0 2-2V8M6.500 14v2.400M3.500 16.400h6" />
          </svg>
        </SearchBox>
        <TaskView>
          <svg width="20" height="15" viewBox="0 0 20 15" fill="none" stroke="#fff" strokeWidth="1.200">
            <path d="M4.600.6h10.800v13.800H4.600zM3 2.600H.6v9.800H3M17 2.600h2.400v9.800H17" />
          </svg>
        </TaskView>
        <AppSlot><FaEdgeLegacy size={22} color="#0c7cd8" /></AppSlot>
        <AppSlot><ExplorerIcon /><RunningBar $l={5} $w={33} /></AppSlot>
        <AppSlot><StoreIcon /></AppSlot>
        <AppSlot><FirefoxIcon /></AppSlot>
        <AppSlot $active><ChromeIcon /><RunningBar $l={1} $w={41} /></AppSlot>
        <AppSlot><WebStormIcon /><RunningBar $l={5} $w={33} /></AppSlot>
        <AppSlot><GithubDesktopIcon /><RunningBar $l={5} $w={33} /></AppSlot>
        <AppSlot><PowerShellIcon /><RunningBar $l={5} $w={33} /></AppSlot>
        <Tray>
          <TraySlot><DropboxTrayIcon /></TraySlot>
          <TraySlot><CCleanerIcon /></TraySlot>
          <TraySlot><DefenderIcon /></TraySlot>
          <TraySlot><WrenchIcon /></TraySlot>
          <TraySlot><CloudIcon /></TraySlot>
          <TraySlot><IntelIcon /></TraySlot>
          <TraySlot><DishIcon /></TraySlot>
          <TraySlot><LockTrayIcon /></TraySlot>
          <TraySlot><ClockTrayIcon /></TraySlot>
          <TraySlot><BatteryIcon /></TraySlot>
          <TraySlot><WifiIcon /></TraySlot>
          <TraySlot><VolumeIcon /></TraySlot>
          <TraySlot $w={40}><KeyboardIcon /></TraySlot>
          <TrayText $w={37}><span>ENG</span><span>US</span></TrayText>
          <TrayText $w={69}><span>21:29</span><span>02-08-2017</span></TrayText>
          <TraySlot $w={49}><NotifyIcon /></TraySlot>
        </Tray>
        <ShowDesktop />
      </Taskbar>
    </Desktop>
  );
}
